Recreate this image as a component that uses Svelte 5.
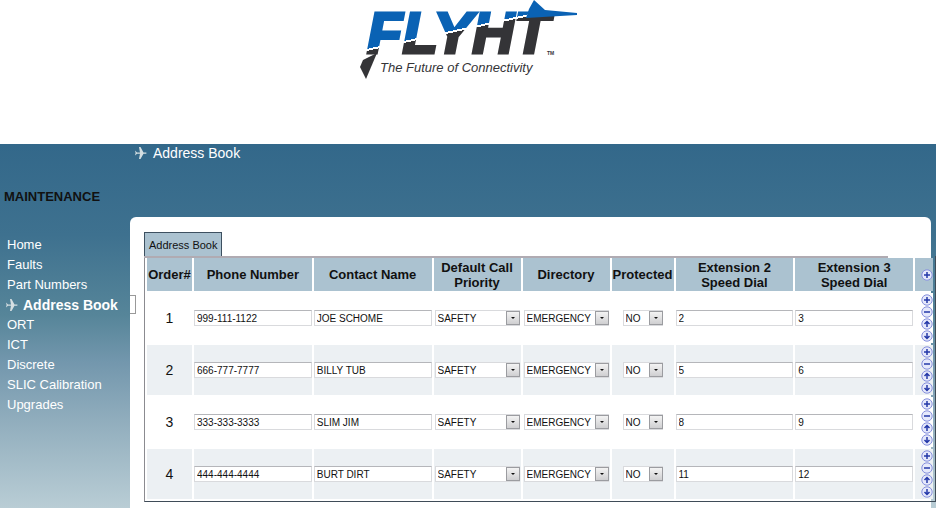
<script>
	const links = [
		'Home', 'Faults', 'Part Numbers', 'Address Book', 'ORT',
		'ICT', 'Discrete', 'SLIC Calibration', 'Upgrades'
	]
	const actions = ['add', 'remove', 'up', 'down']
	const glyphs = {
		add: 'M3 6h6M6 3v6',
		remove: 'M3 6h6',
		up: 'M6 9V4M3.500 6L6 3.500L8.500 6',
		down: 'M6 3v5M3.500 6L6 8.500L8.500 6'
	}

	let current = $state('Address Book')
	let contacts = $state([
		{ phone: '999-111-1122', name: 'JOE SCHOME', priority: 'SAFETY', directory: 'EMERGENCY', locked: 'NO', ext2: '2', ext3: '3' },
		{ phone: '666-777-7777', name: 'BILLY TUB', priority: 'SAFETY', directory: 'EMERGENCY', locked: 'NO', ext2: '5', ext3: '6' },
		{ phone: '333-333-3333', name: 'SLIM JIM', priority: 'SAFETY', directory: 'EMERGENCY', locked: 'NO', ext2: '8', ext3: '9' },
		{ phone: '444-444-4444', name: 'BURT DIRT', priority: 'SAFETY', directory: 'EMERGENCY', locked: 'NO', ext2: '11', ext3: '12' }
	])

	const blank = () => ({ phone: '', name: '', priority: 'SAFETY', directory: 'EMERGENCY', locked: 'NO', ext2: '', ext3: '' })

	function run(action, i) {
		if (action === 'add') contacts.splice(i + 1, 0, blank())
		if (action === 'remove') contacts.splice(i, 1)
		if (action === 'up' && i > 0) contacts.splice(i - 1, 0, contacts.splice(i, 1)[0])
		if (action === 'down') contacts.splice(i + 1, 0, contacts.splice(i, 1)[0])
	}
</script>

{#snippet plane()}
	<svg class="plane" width="14" height="14" viewBox="0 0 14 14" aria-hidden="true">
		<path d="M1 4.500L3 6.500H6L5 1H6.500L9.500 6.500H12Q13.500 7 12 7.800H9.500L6.500 13H5L6 7.800H3L1 9.500L1.600 7Z" />
	</svg>
{/snippet}

{#snippet action(kind, label, onclick)}
	<button type="button" class="action" aria-label={label} {onclick}>
		<svg width="12" height="12" viewBox="0 0 12 12">
			<circle cx="6" cy="6" r="5.200" />
			<path d={glyphs[kind]} />
		</svg>
	</button>
{/snippet}

{#snippet dropdown(row, key, options, label)}
	<span class="dropdown">
		<select bind:value={row[key]} aria-label={label}>
			{#each options as option}
				<option>{option}</option>
			{/each}
		</select>
	</span>
{/snippet}

<div class="page">
	<header>
		<svg class="logo" width="236" height="84" viewBox="350 0 236 84" role="img" aria-label="FLYHT, The Future of Connectivity">
			<defs>
				<linearGradient id="split" gradientUnits="userSpaceOnUse" x1="435.800" y1="14.400" x2="444.200" y2="53.600">
					<stop offset="0.480" stop-color="#0a62b4" />
					<stop offset="0.480" stop-color="#fff" />
					<stop offset="0.530" stop-color="#fff" />
					<stop offset="0.530" stop-color="#343437" />
				</linearGradient>
			</defs>
			<text class="wordmark" x="367" y="53" fill="url(#split)" stroke="url(#split)">FLYHT</text>
			<path class="blue" d="M534 0L545 10L577 13V15L526 18L529 9Z" />
			<path class="dark" d="M377 53L363 60L360 67L366 79Z" />
			<text class="tagline" x="380" y="72">The Future of Connectivity</text>
			<text class="tm" x="547" y="55">TM</text>
		</svg>
	</header>

	<div class="app">
		<div class="crumb">{@render plane()}<span>Address Book</span></div>

		<div class="columns">
			<nav aria-labelledby="section">
				<h2 id="section">MAINTENANCE</h2>
				<ul>
					{#each links as link}
						<li class:current={link === current}>
							{#if link === current}{@render plane()}{/if}
							<a href="#top" onclick={() => current = link}>{link}</a>
						</li>
					{/each}
				</ul>
			</nav>

			<main>
				<button type="button" class="handle" aria-label="Toggle menu"></button>

				<div class="content">
					<button type="button" class="tab">Address Book</button>
					<div class="book">
						<table>
							<colgroup>
								<col class="order">
								<col>
								<col>
								<col class="choice">
								<col class="choice">
								<col class="flag">
								<col>
								<col>
								<col class="tools">
							</colgroup>
							<thead>
								<tr>
									<th>Order#</th>
									<th>Phone Number</th>
									<th>Contact Name</th>
									<th>Default Call Priority</th>
									<th>Directory</th>
									<th>Protected</th>
									<th>Extension 2<br>Speed Dial</th>
									<th>Extension 3<br>Speed Dial</th>
									<th>{@render action('add', 'Add first', () => run('add', -1))}</th>
								</tr>
							</thead>
							<tbody>
								{#each contacts as row, i}
									<tr>
										<td class="number">{i + 1}</td>
										<td><input type="text" bind:value={row.phone} aria-label="Phone Number"></td>
										<td><input type="text" bind:value={row.name} aria-label="Contact Name"></td>
										<td>{@render dropdown(row, 'priority', ['SAFETY', 'NORMAL'], 'Default Call Priority')}</td>
										<td>{@render dropdown(row, 'directory', ['EMERGENCY', 'GENERAL'], 'Directory')}</td>
										<td class="narrow">{@render dropdown(row, 'locked', ['NO', 'YES'], 'Protected')}</td>
										<td><input type="text" bind:value={row.ext2} aria-label="Extension 2 Speed Dial"></td>
										<td><input type="text" bind:value={row.ext3} aria-label="Extension 3 Speed Dial"></td>
										<td>
											{#each actions as kind}
												{@render action(kind, kind, () => run(kind, i))}
											{/each}
										</td>
									</tr>
								{/each}
							</tbody>
						</table>
					</div>
				</div>
			</main>
		</div>
	</div>
</div>

<style>
	:global(body) {
		margin: 0;
		background: #fff;
	}

	.page {
		display: flex;
		flex-direction: column;
		min-height: 100vh;
		font-family: "Liberation Sans", Arial, sans-serif;
		font-size: 13px;
		color: #111;
	}

	header {
		display: flex;
		justify-content: center;
		padding-bottom: 60px;
	}

	.logo { display: block; }
	.blue { fill: #0a62b4; }
	.dark { fill: #343437; }
	.wordmark {
		font-size: 58px;
		font-weight: bold;
		font-style: italic;
		stroke-width: 3;
	}
	.tagline {
		font-size: 13px;
		font-style: italic;
		fill: #343437;
	}
	.tm {
		font-size: 5px;
		font-weight: bold;
		fill: #343437;
	}

	.app {
		flex: 1;
		display: flex;
		flex-direction: column;
		background: linear-gradient(#33688a 0%, #3e718f 25%, #568599 47%, #7397ad 60%, #94b0bf 78%, #b9cdd5 100%);
	}

	.crumb {
		display: flex;
		align-items: center;
		gap: 5px;
		height: 18px;
		padding-left: 134px;
		font-size: 14px;
		color: #fff;
	}

	.plane {
		flex: none;
		fill: #d5dfe2;
	}

	.columns {
		flex: 1;
		display: flex;
		padding-right: 5px;
	}

	nav {
		flex: 0 0 130px;
		padding-top: 27px;
	}
	nav h2 {
		margin: 0 0 30px;
		padding-left: 4px;
		font-size: 13px;
		line-height: 16px;
	}
	ul {
		margin: 0;
		padding: 0 0 0 7px;
		list-style: none;
	}
	li {
		display: flex;
		align-items: center;
		line-height: 20px;
	}
	li a {
		color: #fff;
		text-decoration: none;
		white-space: nowrap;
	}
	li.current {
		gap: 4px;
		margin-left: -2px;
		font-size: 14px;
		font-weight: bold;
	}

	main {
		flex: 1;
		display: flex;
		min-width: 0;
		margin-top: 55px;
		border-radius: 6px 6px 0 0;
		background: #fff;
	}

	button {
		margin: 0;
		padding: 0;
		font: inherit;
		color: inherit;
	}

	.handle {
		flex: none;
		width: 6px;
		height: 19px;
		margin-top: 78px;
		border: 1px solid #999;
		border-left: 0;
		background: #fff;
	}

	/* the table runs a little past the right edge of the panel */
	.content {
		flex: 1;
		min-width: 0;
		margin-right: -5px;
		padding: 15px 0 6px 8px;
	}

	.tab {
		display: block;
		height: 24px;
		padding: 0 4px;
		border: 1px solid #3d5060;
		border-bottom: 0;
		background: #abc2d0;
		font-size: 11px;
	}

	.book {
		position: relative;
	}
	.book::before {
		content: "";
		position: absolute;
		top: 0;
		left: 0;
		right: 48px;
		height: 2px;
		background: #b0abb2;
	}

	table {
		width: 100%;
		table-layout: fixed;
		border-collapse: separate;
		border-spacing: 2px;
		border: solid #3f4c58;
		border-width: 0 1px 1px;
		border-left-color: #8b8b90;
	}
	.order { width: 45px; }
	.choice { width: 87px; }
	.flag { width: 62px; }
	.tools { width: 18px; }

	th, td {
		padding: 0;
		text-align: center;
		vertical-align: middle;
	}
	th {
		height: 33px;
		background: #abc2d0;
		line-height: 15px;
	}
	td {
		height: 50px;
		background: #fff;
	}
	tbody tr:nth-child(even) td {
		background: #ecf0f3;
	}
	.number {
		font-size: 14px;
	}

	input, select {
		display: block;
		box-sizing: border-box;
		width: 100%;
		height: 16px;
		margin: 0;
		padding: 0 2px;
		border: 1px solid #d9dadd;
		border-radius: 0;
		background: #fff;
		font: 10px "Liberation Sans", Arial, sans-serif;
		color: #111;
		appearance: none;
	}
	input {
		border-top-color: #b5b6ba;
	}

	.dropdown {
		display: block;
		position: relative;
		margin: 0 1px;
	}
	.dropdown::before {
		content: "";
		position: absolute;
		top: 1px;
		right: 0;
		box-sizing: border-box;
		width: 14px;
		height: 14px;
		border: 1px solid #9b9ca0;
		background: linear-gradient(#f3f3f3, #cfcfd1);
		pointer-events: none;
	}
	.dropdown::after {
		content: "";
		position: absolute;
		top: 7px;
		right: 5px;
		border: 2px solid transparent;
		border-top-color: #111;
		border-bottom: 0;
		pointer-events: none;
	}
	.narrow .dropdown {
		width: 40px;
		margin: 0 auto;
	}

	.action {
		display: block;
		width: 12px;
		height: 12px;
		margin-left: auto;
		border: 0;
		background: none;
	}
	.action svg {
		display: block;
	}
	.action circle {
		fill: #e6e9fb;
		stroke: #8690dd;
	}
	.action path {
		fill: none;
		stroke: #2438a8;
		stroke-width: 1.500;
	}
</style>
